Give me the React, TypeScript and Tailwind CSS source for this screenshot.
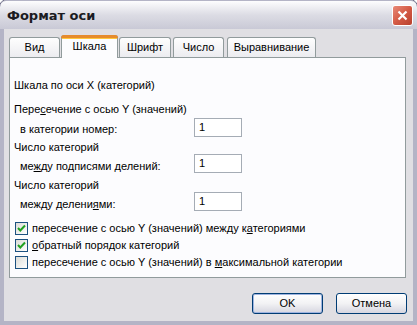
import { useState } from "react";

const FONT = "font-['Tahoma','Liberation_Sans','DejaVu_Sans',sans-serif]";

const TABS = [
  { label: "Вид", cls: "w-[51px]" },
  { label: "Шкала", cls: "w-[57px] ml-[1px]" },
  { label: "Шрифт", cls: "w-[52px] ml-[1px]" },
  { label: "Число", cls: "w-[51px] ml-[2px]" },
  { label: "Выравнивание", cls: "w-[89px] ml-[3px]" },
];

function Tab({ label, cls, active }: { label: string; cls: string; active: boolean }) {
  if (active) {
    return (
      <div className={`relative z-10 -mb-px flex h-[23px] items-center justify-center rounded-t-[3px] border border-b-0 border-[#919b9c] bg-[#fcfcfe] pb-[1px] ${cls}`}>
        <div className="absolute -left-px -right-px -top-px h-[3px] rounded-t-[3px] bg-[#e68b2c]" />
        <div className="absolute left-0 right-0 top-[2px] h-[1px] bg-[#ffc73c]" />
        {label}
      </div>
    );
  }
  return (
    <div className={`flex h-[20px] items-center justify-center rounded-t-[3px] border border-b-0 border-[#919b9c] bg-gradient-to-b from-[#fefefe] to-[#ececf0] ${cls}`}>
      {label}
    </div>
  );
}

function NumberField({ value }: { value: string }) {
  return (
    <div className="flex h-[19px] w-[48px] items-center border border-[#a5acb5] bg-white pl-[4px]">
      {value}
    </div>
  );
}

function Checkbox({ checked, children }: { checked: boolean; children: React.ReactNode }) {
  return (
    <div className="flex h-[17px] items-center gap-[4px]">
      <div className="flex h-[13px] w-[13px] items-center justify-center border border-[#1c5180] bg-gradient-to-br from-[#dcdcd7] to-white">
        {checked && (
          <svg width="9" height="9" viewBox="0 0 9 9">
            <path d="M1 4 L3.3 6.5 L8 1.5" stroke="#21a121" strokeWidth="2" fill="none" />
          </svg>
        )}
      </div>
      <span>{children}</span>
    </div>
  );
}

function Button({ label, primary }: { label: string; primary?: boolean }) {
  return (
    <div
      className={`flex h-[21px] w-[71px] items-center justify-center rounded-[3px] border border-[#003c74] bg-gradient-to-b from-white via-[#f2f2f4] to-[#d6d6e0] ${
        primary ? "shadow-[inset_0_0_0_1px_#9fb4e0]" : ""
      }`}
    >
      {label}
    </div>
  );
}

export default function App() {
  const [active] = useState(1);

  return (
    <div className={`${FONT} h-[325px] w-[417px] text-[11px] leading-[13px] text-black`}>
      <div className="flex h-full flex-col rounded-t-[7px] border-x-[4px] border-b-[4px] border-t border-[#b4b4c6] bg-[#e0dfe3] outline outline-1 outline-[#6e6e88]">
        {/* Title bar */}
        <div className="-mx-[4px] flex h-[28px] items-center justify-between rounded-t-[6px] bg-gradient-to-b from-[#fdfdfe] via-[#dcdce4] to-[#c9c9d6] pl-[7px] pr-[4px]">
          <span className="font-['Trebuchet_MS','DejaVu_Sans',sans-serif] text-[13px] font-bold text-[#1b1b22]">
            Формат оси
          </span>
          <div className="flex h-[21px] w-[21px] items-center justify-center rounded-[3px] border border-white bg-gradient-to-br from-[#e88a78] via-[#d45a45] to-[#b8402e]">
            <svg width="11" height="11" viewBox="0 0 11 11">
              <path d="M1.5 1.5 L9.5 9.5 M9.5 1.5 L1.5 9.5" stroke="white" strokeWidth="2.2" />
            </svg>
          </div>
        </div>

        {/* Tabs */}
        <div className="mt-[6px] flex items-end pl-[5px]">
          {TABS.map((t, i) => (
            <Tab key={t.label} label={t.label} cls={t.cls} active={i === active} />
          ))}
        </div>

        {/* Panel */}
        <div className="ml-[5px] mr-[7px] flex h-[221px] flex-col border border-[#919b9c] bg-[#fcfcfe] pl-[4px]">
          <div className="mt-[21px]">Шкала по оси X (категорий)</div>

          <div className="mt-[11px]">
            Пере<u>с</u>ечение с осью Y (значений)
          </div>
          <div className="mt-[2px] flex items-center">
            <span className="w-[180px] pl-[6px] pt-[3px]">в категории номер:</span>
            <NumberField value="1" />
          </div>

          <div className="mt-[4px]">Число категорий</div>
          <div className="flex items-center">
            <span className="w-[180px] pl-[6px] pt-[5px]">
              ме<u>ж</u>ду подписями делений:
            </span>
            <NumberField value="1" />
          </div>

          <div className="mt-[6px]">Число категорий</div>
          <div className="flex items-center">
            <span className="w-[180px] pl-[6px] pt-[5px]">
              между делени<u>я</u>ми:
            </span>
            <NumberField value="1" />
          </div>

          <div className="mt-[9px] flex flex-col pl-[1px]">
            <Checkbox checked>
              пересечение с осью Y (значений) между к<u>а</u>тегориями
            </Checkbox>
            <Checkbox checked>
              <u>о</u>братный порядок категорий
            </Checkbox>
            <Checkbox checked={false}>
              пересечение с осью Y (значений) в <u>м</u>аксимальной категории
            </Checkbox>
          </div>
        </div>

        {/* Buttons */}
        <div className="mt-[15px] flex justify-end gap-[13px] pr-[6px]">
          <Button label="OK" primary />
          <Button label="Отмена" />
        </div>
      </div>
    </div>
  );
}
